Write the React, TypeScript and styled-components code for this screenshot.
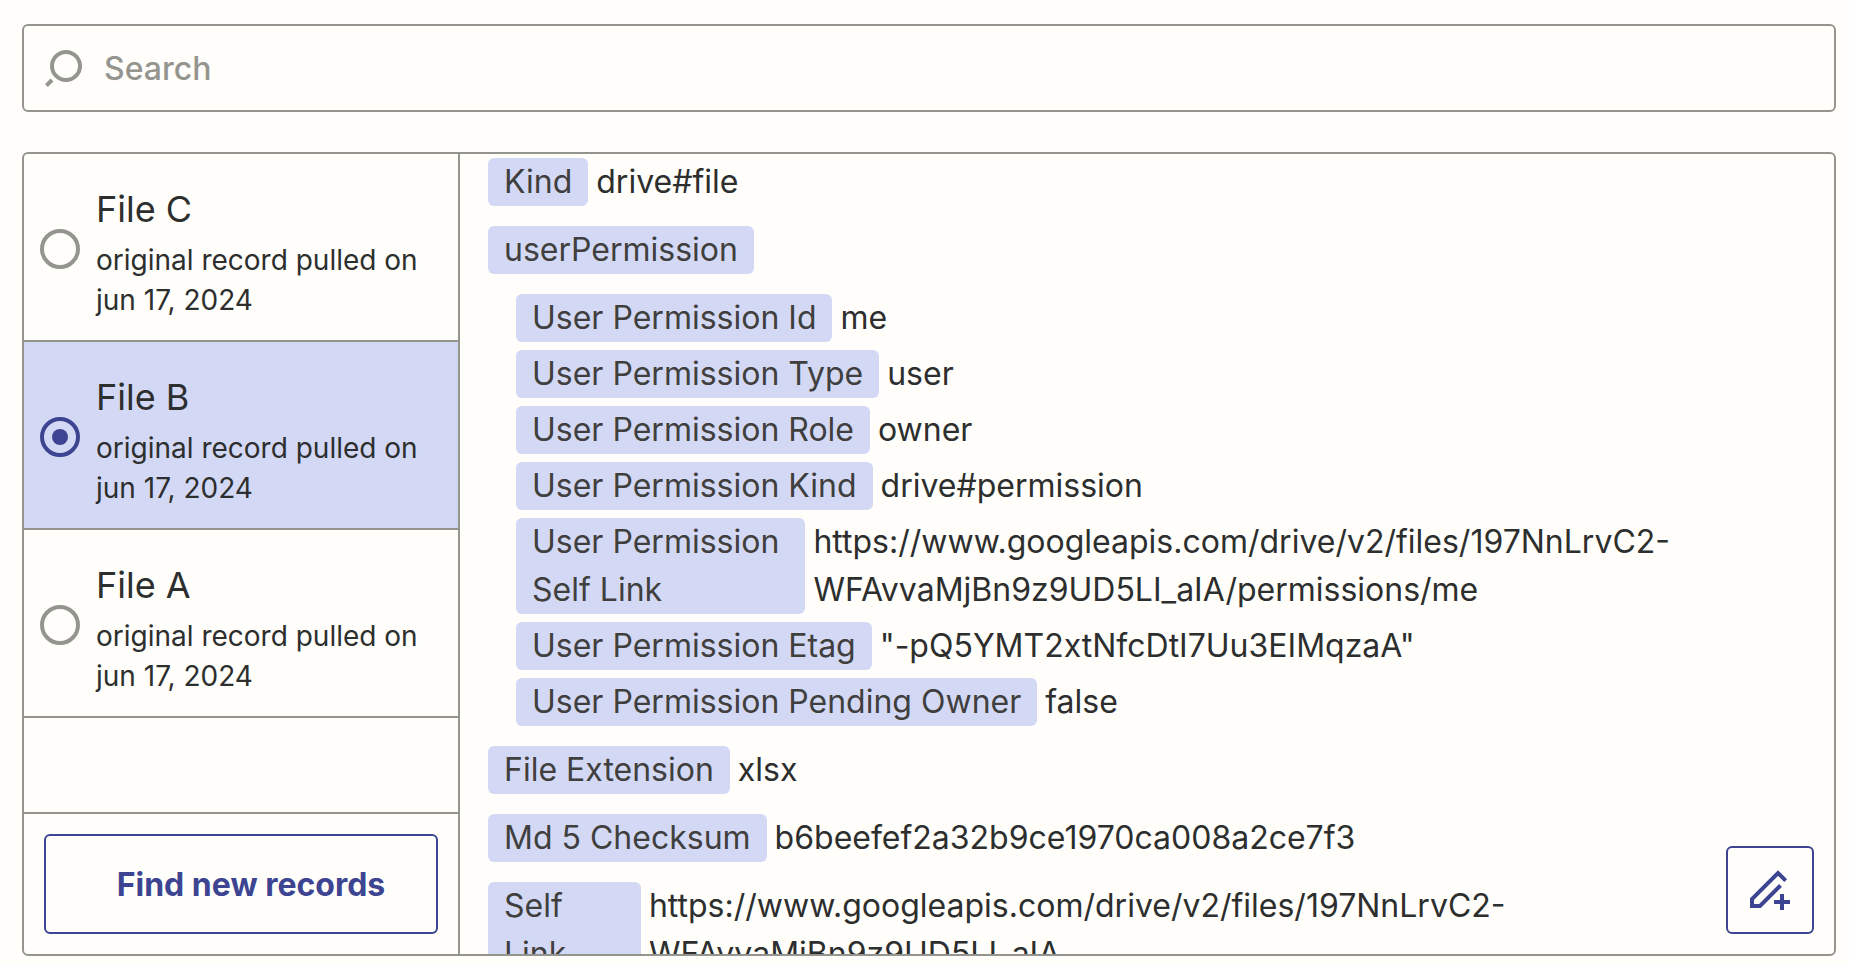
import React, { useState } from "react";
import styled, { createGlobalStyle } from "styled-components";

const ink = "#2d2e2e";
const line = "#95958f";
const paper = "#fffefb";
const accent = "#3d4592";
const tint = "#d3d9f5";

const GlobalStyle = createGlobalStyle`
  * { box-sizing: border-box; }
  body {
    margin: 0;
    background: ${paper};
    color: ${ink};
    font-family: Inter, "Liberation Sans", sans-serif;
    font-size: 32px;
    line-height: 48px;
  }
  button, input { font: inherit; }
`;

const Page = styled.main`
  display: flex;
  flex-direction: column;
  gap: 40px;
  height: 100vh;
  padding: 24px 14px 8px 22px;
`;

const SearchBox = styled.label`
  display: flex;
  flex: none;
  align-items: center;
  gap: 20px;
  height: 88px;
  padding: 0 20px;
  border: 2px solid ${line};
  border-radius: 6px;
`;

const SearchInput = styled.input`
  flex: 1;
  min-width: 0;
  padding: 2px 0 0;
  border: 0;
  outline: 0;
  background: none;
  color: ${ink};
  font-weight: 500;
  &::placeholder { color: ${line}; opacity: 1; }
`;

const Panel = styled.section`
  position: relative;
  display: flex;
  flex: 1;
  min-height: 0;
  border: 2px solid ${line};
  border-radius: 6px;
  overflow: hidden;
`;

const Sidebar = styled.div`
  display: flex;
  flex: none;
  flex-direction: column;
  width: 436px;
  border-right: 2px solid ${line};
`;

const RecordList = styled.div`
  flex: 1;
  min-height: 0;
  overflow-y: auto;
  scrollbar-width: none;
`;

const RecordRow = styled.label<{ $selected: boolean }>`
  display: flex;
  align-items: center;
  gap: 16px;
  padding: 24px 16px 20px;
  border-bottom: 2px solid ${line};
  background: ${(p) => (p.$selected ? tint : "transparent")};
  cursor: pointer;
`;

const Radio = styled.input`
  display: grid;
  flex: none;
  place-items: center;
  appearance: none;
  width: 40px;
  height: 40px;
  margin: 0;
  border: 4px solid ${line};
  border-radius: 50%;
  &:checked { border-color: ${accent}; }
  &:checked::before {
    content: "";
    width: 16px;
    height: 16px;
    border-radius: 50%;
    background: ${accent};
  }
`;

const RecordText = styled.span`
  display: flex;
  flex-direction: column;
`;

const RecordName = styled.span`
  font-size: 36px;
  line-height: 62px;
`;

const RecordNote = styled.span`
  font-size: 28px;
  line-height: 40px;
`;

const SidebarFooter = styled.div`
  display: flex;
  flex: none;
  padding: 20px;
  border-top: 2px solid ${line};
`;

const OutlineButton = styled.button`
  border: 2px solid ${accent};
  border-radius: 6px;
  background: ${paper};
  color: ${accent};
  cursor: pointer;
`;

const FindButton = styled(OutlineButton)`
  flex: 1;
  height: 100px;
  padding: 2px 0 0 20px;
  font-weight: 700;
`;

const EditButton = styled(OutlineButton)`
  position: absolute;
  right: 20px;
  bottom: 20px;
  display: grid;
  place-items: center;
  width: 88px;
  height: 88px;
  padding: 0;
`;

const Details = styled.div`
  display: flex;
  flex: 1;
  flex-direction: column;
  gap: 20px;
  min-width: 0;
  padding: 4px 8px 4px 28px;
  overflow-y: auto;
  scrollbar-width: none;
`;

const NestedFields = styled.div`
  display: flex;
  flex-direction: column;
  gap: 8px;
  padding-left: 28px;
`;

const FieldRow = styled.div`
  display: flex;
  gap: 8px;
`;

const FieldName = styled.span`
  padding: 0 16px;
  border-radius: 6px;
  background: ${tint};
  color: #403f3e;
`;

const FieldValue = styled.span`
  min-width: 0;
`;

type FieldData = { name: string; value?: string };

const permissionFields: FieldData[] = [
  { name: "User Permission Id", value: "me" },
  { name: "User Permission Type", value: "user" },
  { name: "User Permission Role", value: "owner" },
  { name: "User Permission Kind", value: "drive#permission" },
  {
    name: "User Permission Self Link",
    value:
      "https://www.googleapis.com/drive/v2/files/197NnLrvC2-WFAvvaMjBn9z9UD5LI_aIA/permissions/me",
  },
  { name: "User Permission Etag", value: '"-pQ5YMT2xtNfcDtI7Uu3EIMqzaA"' },
  { name: "User Permission Pending Owner", value: "false" },
];

const records = ["File C", "File B", "File A"];

function Field({ name, value }: FieldData) {
  return (
    <FieldRow>
      <FieldName>{name}</FieldName>
      {value && <FieldValue>{value}</FieldValue>}
    </FieldRow>
  );
}

function SearchIcon() {
  return (
    <svg width="40" height="40" viewBox="0 0 40 40" fill="none" stroke={line} strokeWidth="4" aria-hidden="true">
      <circle cx="22" cy="18" r="14" />
      <path d="M2.4 37.6 8 32" />
    </svg>
  );
}

function EditIcon() {
  return (
    <svg width="48" height="48" viewBox="0 0 48 48" fill="none" stroke={accent} strokeWidth="4" aria-hidden="true">
      <path d="M39.7 14.7 32 7 6 33v7h8L34.5 19.5" />
      <path d="M36 28v16M28 36h16" />
    </svg>
  );
}

export default function App() {
  const [selected, setSelected] = useState("File B");
  return (
    <>
      <GlobalStyle />
      <Page>
        <SearchBox>
          <SearchIcon />
          <SearchInput type="text" placeholder="Search" aria-label="Search" />
        </SearchBox>
        <Panel>
          <Sidebar>
            <RecordList role="radiogroup" aria-label="Records">
              {records.map((name) => (
                <RecordRow key={name} $selected={name === selected}>
                  <Radio
                    type="radio"
                    name="record"
                    checked={name === selected}
                    onChange={() => setSelected(name)}
                  />
                  <RecordText>
                    <RecordName>{name}</RecordName>
                    <RecordNote>original record pulled on jun 17, 2024</RecordNote>
                  </RecordText>
                </RecordRow>
              ))}
            </RecordList>
            <SidebarFooter>
              <FindButton type="button">Find new records</FindButton>
            </SidebarFooter>
          </Sidebar>
          <Details>
            <Field name="Kind" value="drive#file" />
            <Field name="userPermission" />
            <NestedFields>
              {permissionFields.map((field) => (
                <Field key={field.name} {...field} />
              ))}
            </NestedFields>
            <Field name="File Extension" value="xlsx" />
            <Field name="Md 5 Checksum" value="b6beefef2a32b9ce1970ca008a2ce7f3" />
            <Field
              name="Self Link"
              value="https://www.googleapis.com/drive/v2/files/197NnLrvC2-WFAvvaMjBn9z9UD5LI_aIA"
            />
          </Details>
          <EditButton type="button" aria-label="Edit record">
            <EditIcon />
          </EditButton>
        </Panel>
      </Page>
    </>
  );
}
